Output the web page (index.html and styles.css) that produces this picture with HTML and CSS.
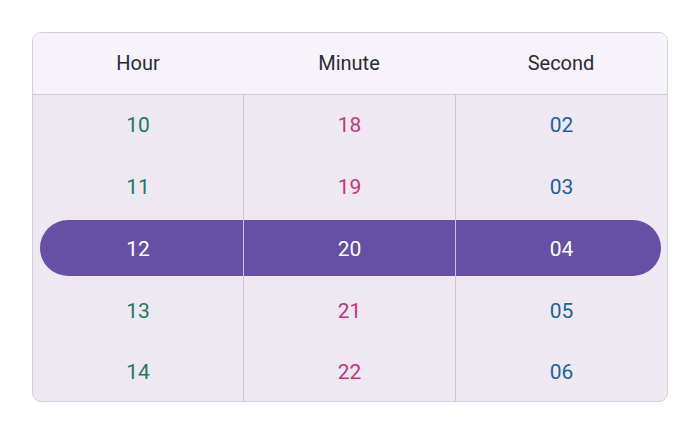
FILE: index.html
```html
<!DOCTYPE html>
<html>
<head>
<meta charset="utf-8">
<link rel="stylesheet" href="styles.css">
</head>
<body>
<div class="picker">
  <div class="header">
    <div class="hcell">Hour</div>
    <div class="hcell">Minute</div>
    <div class="hcell">Second</div>
  </div>
  <div class="body">
    <div class="highlight"></div>
    <div class="col hour">
      <div class="item">10</div>
      <div class="item">11</div>
      <div class="item sel">12</div>
      <div class="item">13</div>
      <div class="item">14</div>
    </div>
    <div class="col minute">
      <div class="item">18</div>
      <div class="item">19</div>
      <div class="item sel">20</div>
      <div class="item">21</div>
      <div class="item">22</div>
    </div>
    <div class="col second">
      <div class="item">02</div>
      <div class="item">03</div>
      <div class="item sel">04</div>
      <div class="item">05</div>
      <div class="item">06</div>
    </div>
  </div>
</div>
</body>
</html>
```
FILE: styles.css
```css
* { box-sizing: border-box; }
html, body { margin: 0; padding: 0; background: #ffffff; }
body {
  font-family: Roboto, "Liberation Sans", sans-serif;
  padding: 32px 32px 0 32px;
}
.picker {
  width: 636px;
  height: 370px;
  border: 1.5px solid #d3cfd9;
  border-radius: 9px;
  overflow: hidden;
  background: #ede8f2;
  display: flex;
  flex-direction: column;
}
.header {
  height: 61.5px;
  flex: none;
  background: #f7f3fa;
  border-bottom: 1.5px solid #cdc8d3;
  display: grid;
  grid-template-columns: 210px 212px 1fr;
}
.hcell {
  display: flex;
  align-items: center;
  justify-content: center;
  font-size: 20px;
  color: #2e2b33;
}
.body {
  position: relative;
  flex: 1;
  display: grid;
  grid-template-columns: 210px 212px 1fr;
}
.highlight {
  position: absolute;
  left: 6.5px;
  right: 6px;
  top: 125px;
  height: 56px;
  border-radius: 28px;
  background: #6650a5;
}
.col {
  position: relative;
  z-index: 1;
  display: flex;
  flex-direction: column;
}
.col + .col { border-left: 1.5px solid #ccc6d6; }
.item {
  height: 61.75px;
  flex: none;
  display: flex;
  align-items: center;
  justify-content: center;
  font-size: 21px;
}
.hour .item { color: #1f7a5c; }
.minute .item { color: #c9357c; }
.second .item { color: #1e5f9f; }
.col .item.sel { color: #ffffff; }
```
